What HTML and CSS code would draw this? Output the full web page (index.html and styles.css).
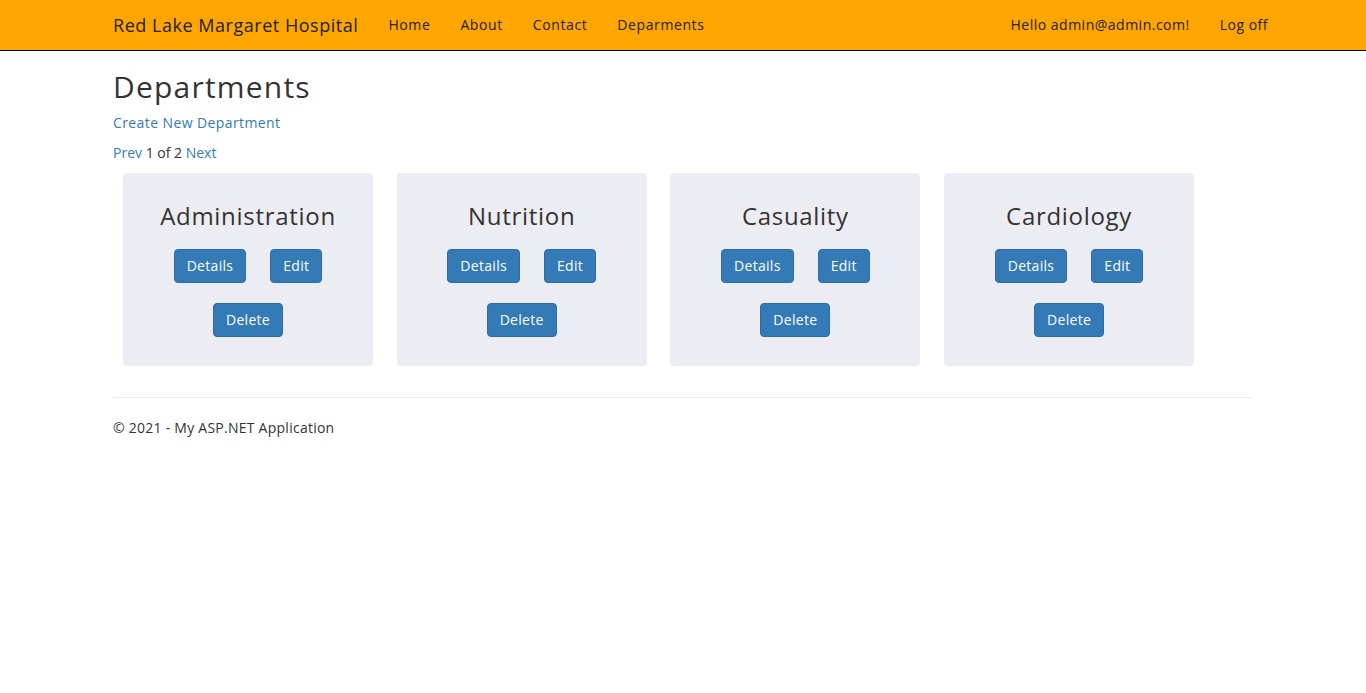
FILE: index.html
```html
<!DOCTYPE html>
<html lang="en">
<head>
<meta charset="utf-8">
<title>Departments</title>
<link rel="stylesheet" href="styles.css">
</head>
<body>
<header class="navbar">
  <div class="container nav-inner">
    <a class="brand" href="#">Red Lake Margaret Hospital</a>
    <nav class="nav-left">
      <a href="#">Home</a>
      <a href="#">About</a>
      <a href="#">Contact</a>
      <a href="#">Deparments</a>
    </nav>
    <nav class="nav-right">
      <a href="#">Hello admin@admin.com!</a>
      <a href="#">Log off</a>
    </nav>
  </div>
</header>
<main class="container body-content">
  <h2 class="title">Departments</h2>
  <p><a href="#">Create New Department</a></p>
  <p class="pager"><a href="#">Prev</a> 1 of 2 <a href="#">Next</a></p>
  <div class="cards">
    <div class="card">
      <h3>Administration</h3>
      <div class="btn-row"><a class="btn" href="#">Details</a><a class="btn" href="#">Edit</a></div>
      <div class="btn-row"><a class="btn" href="#">Delete</a></div>
    </div>
    <div class="card">
      <h3>Nutrition</h3>
      <div class="btn-row"><a class="btn" href="#">Details</a><a class="btn" href="#">Edit</a></div>
      <div class="btn-row"><a class="btn" href="#">Delete</a></div>
    </div>
    <div class="card">
      <h3>Casuality</h3>
      <div class="btn-row"><a class="btn" href="#">Details</a><a class="btn" href="#">Edit</a></div>
      <div class="btn-row"><a class="btn" href="#">Delete</a></div>
    </div>
    <div class="card">
      <h3>Cardiology</h3>
      <div class="btn-row"><a class="btn" href="#">Details</a><a class="btn" href="#">Edit</a></div>
      <div class="btn-row"><a class="btn" href="#">Delete</a></div>
    </div>
  </div>
  <hr>
  <footer><p>&copy; 2021 - My ASP.NET Application</p></footer>
</main>
</body>
</html>
```
FILE: styles.css
```css
* { box-sizing: border-box; }
html, body { margin: 0; padding: 0; }
body {
  font-family: "Open Sans", "DejaVu Sans", sans-serif;
  font-size: 14px;
  line-height: 20px;
  color: #333;
  background: #fff;
  letter-spacing: 0.4px;
}
a { color: #337ab7; text-decoration: none; }
.container {
  width: 1170px;
  margin: 0 auto;
  padding: 0 15px;
}
.navbar {
  background: #ffa500;
  height: 51px;
  border-bottom: 1px solid #000;
}
.nav-inner {
  display: flex;
  align-items: center;
  height: 50px;
}
.navbar a { color: #222; }
.brand {
  font-size: 18px;
  padding-right: 15px;
  letter-spacing: 0.53px;
}
.nav-left, .nav-right { display: flex; }
.nav-left a { padding: 0 15px; letter-spacing: 0.6px; }
.nav-right a { padding: 0 15px; letter-spacing: 0.5px; }
.nav-right { margin-left: auto; margin-right: -30px; }
.title {
  font-size: 30px;
  font-weight: 400;
  line-height: 33px;
  margin: 19px 0 10px;
  letter-spacing: 1.2px;
}
p { margin: 0 0 10px; }
.pager { letter-spacing: 0; }
.cards {
  display: flex;
  gap: 23.7px;
  padding-left: 10px;
  margin-top: 9px;
  margin-bottom: 31px;
}
.card {
  width: 250px;
  height: 193px;
  background: #ecedf2;
  border-radius: 4px;
  padding-top: 30px;
  text-align: center;
}
.card h3 {
  font-size: 24px;
  font-weight: 400;
  line-height: 26px;
  margin: 0 0 20px;
  letter-spacing: 0.7px;
}
.btn-row {
  display: flex;
  justify-content: center;
  gap: 24px;
  margin-bottom: 20px;
}
.btn {
  display: inline-block;
  background: #337ab7;
  border: 1px solid #2e6da4;
  color: #fff;
  border-radius: 4px;
  padding: 6px 12px;
  line-height: 20px;
  font-size: 14px;
  letter-spacing: 0.3px;
}
hr {
  border: 0;
  border-top: 1px solid #eee;
  margin: 20px 0;
}
footer p { margin: 0; letter-spacing: 0.25px; }
```
